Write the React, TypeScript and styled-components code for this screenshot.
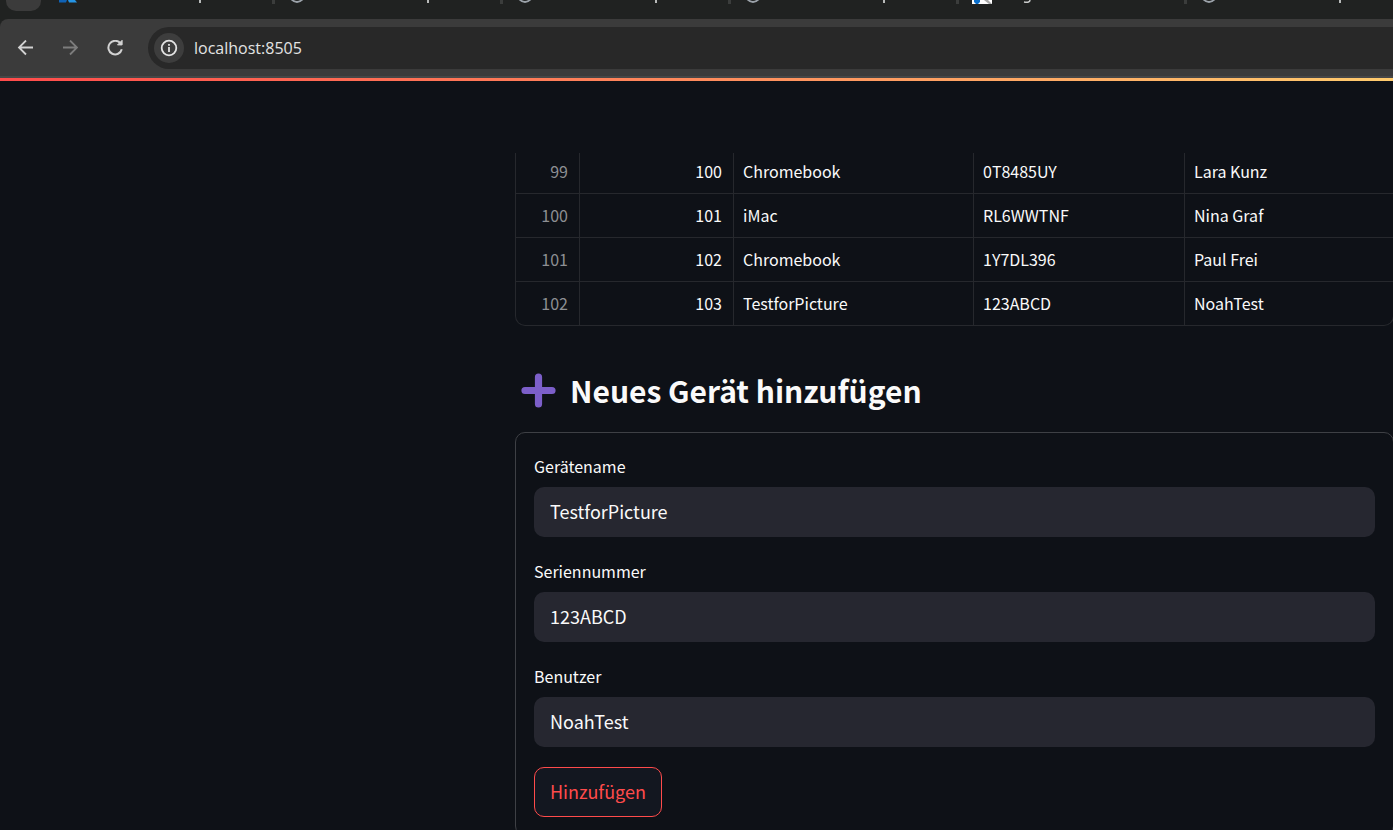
import React from "react";
import styled, { createGlobalStyle } from "styled-components";

const GlobalStyle = createGlobalStyle`
  *, *::before, *::after { box-sizing: border-box; }
  html, body { margin: 0; background: #0e1117; overflow: hidden; }
  body { color: #fafafa; font-family: "Noto Sans CJK SC", "Noto Sans", sans-serif; }
`;

const Page = styled.div`
  min-height: 100vh;
  background: #0e1117;
`;

const TabStrip = styled.div`
  display: flex;
  height: 19px;
  overflow: hidden;
  background: #202221;
`;

const TabSearch = styled.button`
  flex: none;
  width: 35px;
  height: 11px;
  margin: 0 3px 0 6px;
  padding: 0;
  border: 0;
  border-radius: 0 0 10px 10px;
  background: #3b3b3b;
`;

const TabArt = styled.svg`
  flex: none;
  width: 228px;
  height: 19px;
  display: block;
`;

const Toolbar = styled.div`
  display: flex;
  align-items: center;
  height: 59px;
  padding: 0 0 0 13px;
  background: #3b3b3b;
  border-bottom: 2px solid #474747;
  border-top-left-radius: 8px;
`;

const ToolbarWrap = styled.header`
  background: #202221;
`;

const NavButton = styled.button<{ $dim?: boolean }>`
  display: grid;
  place-items: center;
  width: 24px;
  height: 24px;
  margin-right: 21px;
  padding: 0;
  border: 0;
  background: none;
  color: ${(p) => (p.$dim ? "#7d7d7d" : "#d2d2d2")};
`;

const AddressBar = styled.div`
  flex: 1;
  display: flex;
  align-items: center;
  gap: 10px;
  height: 42px;
  padding-left: 6px;
  border-radius: 21px 0 0 21px;
  background: #282828;
`;

const SiteInfo = styled.button`
  display: grid;
  place-items: center;
  width: 30px;
  height: 30px;
  padding: 0;
  border: 0;
  border-radius: 50%;
  background: #3d3d3d;
  color: #e3e3e3;
`;

const UrlInput = styled.input`
  flex: 1;
  min-width: 0;
  padding: 0;
  border: 0;
  outline: 0;
  background: none;
  color: #e3e3e3;
  font: 16px/26px "Open Sans", "Noto Sans", sans-serif;
`;

const Decoration = styled.div`
  height: 3px;
  background: linear-gradient(90deg, #ff4b4b, #ffcb6e);
`;

const Main = styled.main`
  margin: 72px -1px 0 515px;
`;

const TableViewport = styled.div`
  display: flex;
  flex-direction: column;
  justify-content: flex-end;
  height: 173px;
  overflow: hidden;
  border: 1px solid #26282d;
  border-top: 0;
  border-radius: 0 0 10px 10px;
`;

const Table = styled.table`
  width: 100%;
  table-layout: fixed;
  border-collapse: separate;
  border-spacing: 0;
  font-size: 16px;
  line-height: 24px;
`;

const Cell = styled.td<{ $end?: boolean; $muted?: boolean }>`
  height: 44px;
  padding: 0 ${(p) => (p.$end ? "11px" : "9px")} 2px 9px;
  text-align: ${(p) => (p.$end ? "right" : "left")};
  color: ${(p) => (p.$muted ? "#8d8f93" : "#fafafa")};
  border-right: 1px solid #26282d;
  border-bottom: 1px solid #26282d;
  &:last-child { border-right: 0; }
  tr:last-child > & { height: 43px; border-bottom: 0; }
`;

const Heading = styled.h2`
  display: flex;
  align-items: center;
  gap: 14px;
  margin: 43px 0 0;
  padding-left: 6px;
  font-size: 30px;
  line-height: 42px;
  font-weight: 700;
  white-space: nowrap;
`;

const Form = styled.form`
  display: flex;
  flex-direction: column;
  align-items: stretch;
  gap: 19px;
  margin-top: 21px;
  padding: 18px;
  border: 1px solid #3e4045;
  border-radius: 10px;
`;

const Field = styled.div`
  display: flex;
  flex-direction: column;
  gap: 6px;
`;

const Label = styled.label`
  font-size: 16px;
  line-height: 30px;
`;

const TextInput = styled.input`
  width: 100%;
  height: 50px;
  padding: 0 16px 2px;
  border: 0;
  border-radius: 10px;
  outline: 0;
  background: #262730;
  color: #fafafa;
  font: inherit;
  font-size: 18px;
`;

const SubmitButton = styled.button`
  align-self: flex-start;
  height: 50px;
  margin-top: 1px;
  padding: 0 15px 2px;
  border: 1px solid #ff4b4b;
  border-radius: 10px;
  background: #131720;
  color: #ff4b4b;
  font: inherit;
  font-size: 18px;
`;

type Mark = "azure" | "globe" | "photo";

const tabs: { mark: Mark; letter: "p" | "g" }[] = [
  { mark: "azure", letter: "p" },
  { mark: "globe", letter: "p" },
  { mark: "globe", letter: "p" },
  { mark: "globe", letter: "p" },
  { mark: "photo", letter: "g" },
  { mark: "globe", letter: "p" },
];

function Tab({ mark, letter, first }: { mark: Mark; letter: "p" | "g"; first: boolean }) {
  return (
    <TabArt viewBox="0 0 228 19" aria-hidden="true">
      {!first && <rect x="0" y="0" width="3" height="4" fill="#3b3d3c" />}
      {mark === "azure" && (
        <>
          <path d="M15 0h8l-1 2.500h-7z" fill="#0f62b5" />
          <path d="M24 0h7l2 2.500h-8z" fill="#2595e6" />
        </>
      )}
      {mark === "globe" && (
        <path d="M19 -1q6 6 12 0M23 -1h4" fill="none" stroke="#9ca3aa" strokeWidth="1.8" />
      )}
      {mark === "photo" && (
        <>
          <rect x="16" y="0" width="20" height="4" fill="#fff" />
          <path d="M18 0h6v2l-2 2h-2l-2-2z" fill="#0b6fcb" />
          <path d="M28 0h4l4 4h-3z" fill="#a9a9a9" />
        </>
      )}
      {letter === "p" ? (
        <rect x="155" y="0" width="2" height="3" fill="#b9bbba" />
      ) : (
        <path d="M68 2q6 1 6-2" fill="none" stroke="#c9cbca" strokeWidth="1.5" />
      )}
    </TabArt>
  );
}

const ArrowIcon = ({ flip }: { flip?: boolean }) => (
  <svg width="16" height="16" viewBox="0 0 16 16" fill="none" stroke="currentColor" strokeWidth="1.8">
    <path d={flip ? "M1 7.5H15M8 .5l7 7-7 7" : "M16 7.5H2M9 .5l-7 7 7 7"} />
  </svg>
);

const ReloadIcon = () => (
  <svg width="16" height="16" viewBox="-0.5 0.5 16 16" fill="none" stroke="currentColor" strokeWidth="2">
    <path d="M14.3 9.8A6.8 6.8 0 1 1 12.8 3.6L14 5" />
    <path d="M14.6 .8V5.4H10z" fill="currentColor" strokeWidth="1" />
  </svg>
);

const InfoIcon = () => (
  <svg width="18" height="18" viewBox="0 0 18 18" fill="none" stroke="currentColor" strokeWidth="1.8">
    <circle cx="9" cy="9" r="7.3" />
    <path d="M9 8v5M9 5v1.8" />
  </svg>
);

const PlusIcon = () => (
  <svg width="35" height="35" viewBox="0 0 35 35" fill="none" stroke="#7c5fc9" strokeWidth="7.2" strokeLinecap="round">
    <path d="M17.5 4v27M4 17.5h27" />
  </svg>
);

const rows = [
  [99, 100, "Chromebook", "0T8485UY", "Lara Kunz"],
  [100, 101, "iMac", "RL6WWTNF", "Nina Graf"],
  [101, 102, "Chromebook", "1Y7DL396", "Paul Frei"],
  [102, 103, "TestforPicture", "123ABCD", "NoahTest"],
];

const fields = [
  { id: "name", label: "Gerätename", value: "TestforPicture" },
  { id: "serial", label: "Seriennummer", value: "123ABCD" },
  { id: "user", label: "Benutzer", value: "NoahTest" },
];

const Column = styled.col<{ $width?: number }>`
  width: ${(p) => (p.$width ? `${p.$width}px` : "auto")};
`;

export default function App() {
  return (
    <Page>
      <GlobalStyle />
      <TabStrip>
        <TabSearch type="button" aria-label="Tabs" />
        {tabs.map((t, i) => (
          <Tab key={i} mark={t.mark} letter={t.letter} first={i === 0} />
        ))}
      </TabStrip>
      <ToolbarWrap>
        <Toolbar>
          <NavButton type="button" aria-label="Zurück"><ArrowIcon /></NavButton>
          <NavButton type="button" aria-label="Vorwärts" $dim><ArrowIcon flip /></NavButton>
          <NavButton type="button" aria-label="Neu laden"><ReloadIcon /></NavButton>
          <AddressBar>
            <SiteInfo type="button" aria-label="Website-Informationen"><InfoIcon /></SiteInfo>
            <UrlInput aria-label="Adresse" defaultValue="localhost:8505" />
          </AddressBar>
        </Toolbar>
      </ToolbarWrap>
      <Decoration />
      <Main>
        <TableViewport>
          <Table>
            <colgroup>
              <Column $width={64} />
              <Column $width={154} />
              <Column $width={240} />
              <Column $width={211} />
              <Column />
            </colgroup>
            <tbody>
              {rows.map((row) => (
                <tr key={row[0]}>
                  {row.map((value, i) => (
                    <Cell key={i} $end={i < 2} $muted={i === 0}>{value}</Cell>
                  ))}
                </tr>
              ))}
            </tbody>
          </Table>
        </TableViewport>
        <Heading><PlusIcon />Neues Gerät hinzufügen</Heading>
        <Form onSubmit={(e) => e.preventDefault()}>
          {fields.map((f) => (
            <Field key={f.id}>
              <Label htmlFor={f.id}>{f.label}</Label>
              <TextInput id={f.id} defaultValue={f.value} />
            </Field>
          ))}
          <SubmitButton type="submit">Hinzufügen</SubmitButton>
        </Form>
      </Main>
    </Page>
  );
}
